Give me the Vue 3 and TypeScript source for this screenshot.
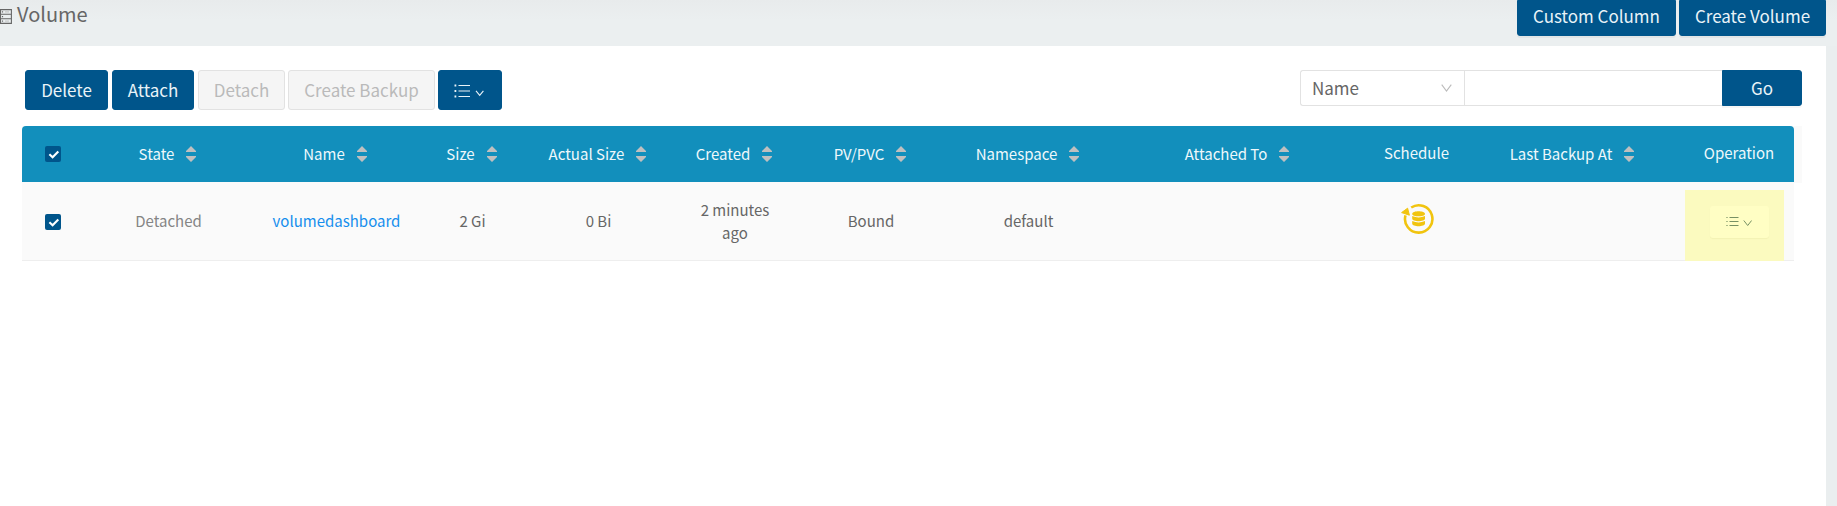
<script setup lang="ts">
interface Column {
  key: string
  label: string
  sortable: boolean
  value?: string
}

const columns: Column[] = [
  { key: 'state', label: 'State', sortable: true, value: 'Detached' },
  { key: 'name', label: 'Name', sortable: true, value: 'volumedashboard' },
  { key: 'size', label: 'Size', sortable: true, value: '2 Gi' },
  { key: 'actual', label: 'Actual Size', sortable: true, value: '0 Bi' },
  { key: 'created', label: 'Created', sortable: true, value: '2 minutes ago' },
  { key: 'pv', label: 'PV/PVC', sortable: true, value: 'Bound' },
  { key: 'namespace', label: 'Namespace', sortable: true, value: 'default' },
  { key: 'attached', label: 'Attached To', sortable: true },
  { key: 'schedule', label: 'Schedule', sortable: false },
  { key: 'backup', label: 'Last Backup At', sortable: true },
  { key: 'operation', label: 'Operation', sortable: false },
]
</script>

<template>
  <div class="page">
    <header class="top">
      <div class="title">
        <svg class="title-icon" width="12" height="16" viewBox="0 0 12 16">
          <path d="M.5 .6H11.4V14.4H.5ZM.5 5.2H11.4M.5 9.8H11.4" fill="none" stroke="#666" stroke-width="1.1" />
          <path d="M2.5 2.3v1.3M2.5 6.9v1.3M2.5 11.5v1.3" stroke="#666" stroke-width="1.2" />
          <path d="M5 2.9h4M5 12.1h4" stroke="#aaa" stroke-width=".7" />
        </svg>
        <span>Volume</span>
      </div>
      <div class="top-actions">
        <button class="btn primary custom">Custom Column</button>
        <button class="btn primary create">Create Volume</button>
      </div>
    </header>
    <main class="content">
      <div class="toolbar">
        <div class="actions">
          <button class="btn primary delete">Delete</button>
          <button class="btn primary attach">Attach</button>
          <button class="btn disabled detach">Detach</button>
          <button class="btn disabled mkbackup">Create Backup</button>
          <button class="btn primary more">
            <svg width="30" height="16" viewBox="0 0 30 16" fill="none" stroke="currentColor">
              <path d="M4.5 2.5H16M4.5 8H16M4.5 13.5H16" stroke-width="1.2" />
              <path d="M.5 2.5H2.3M.5 8H2.3M.5 13.5H2.3" stroke-width="1.8" />
              <path d="M22 7.8L25.7 12.4L29.4 7.8" stroke-width="1.1" />
            </svg>
          </button>
        </div>
        <div class="search">
          <div class="select">
            <span>Name</span>
            <svg width="11" height="8" viewBox="0 0 11 8"><path d="M.7.6L5.5 7L10.3.6" fill="none" stroke="#bbb" stroke-width="1.1" /></svg>
          </div>
          <div class="field"></div>
          <button class="btn primary go">Go</button>
        </div>
      </div>
      <div class="table-wrap">
        <div class="table">
          <div class="row head">
            <div class="cell">
              <span class="check"><svg width="16" height="16" viewBox="0 0 16 16"><path d="M4.4 8.2L7.6 11.2L13.3 5.4" fill="none" stroke="#fff" stroke-width="2.1" /></svg></span>
            </div>
            <div v-for="c in columns" :key="c.key" class="cell" :class="['h-' + c.key, { plain: !c.sortable }]">
              <span class="label">{{ c.label }}</span>
              <svg v-if="c.sortable" class="sort" width="10" height="16" viewBox="0 0 10 16">
                <path d="M5 0L10 5V6H0V5ZM5 16L10 11V10H0V11Z" fill="#bfbfbf" />
              </svg>
            </div>
          </div>
          <div class="row body">
            <div class="cell">
              <span class="check"><svg width="16" height="16" viewBox="0 0 16 16"><path d="M4.4 8.2L7.6 11.2L13.3 5.4" fill="none" stroke="#fff" stroke-width="2.1" /></svg></span>
            </div>
            <div v-for="c in columns" :key="c.key" class="cell" :class="'b-' + c.key">
              <svg v-if="c.key === 'schedule'" class="schedule" width="34" height="32" viewBox="0 0 34 32">
                <path d="M11.2 4.5A13.7 13.7 0 1 1 5.5 12.3" fill="none" stroke="#f1c40f" stroke-width="2.6" />
                <path d="M7.6 5.2L1.6 9.6L9.4 12.2Z" fill="#f1c40f" stroke="#f1c40f" />
                <path d="M12.2 10.9C12.2 7.5 25 7.5 25 10.9C25 14 12.2 14 12.2 10.9ZM12.2 13.1Q18.6 16 25 13.1V15.6C25 19.2 12.2 19.2 12.2 15.6ZM12.2 18.1Q18.6 21 25 18.1V20.6C25 24.2 12.2 24.2 12.2 20.6Z" fill="#f1c40f" />
              </svg>
              <div v-else-if="c.key === 'operation'" class="highlight">
                <button class="op">
                  <svg width="26" height="12" viewBox="0 0 26 12" fill="none" stroke="#779064">
                    <path d="M3.5 1.5H12.5M3.5 5.5H12.5M3.5 9.5H12.5M.4 1.5H1.6M.4 5.5H1.6M.4 9.5H1.6" />
                    <path d="M17.8 4.5L21.7 9.5L25.6 4.5" />
                  </svg>
                </button>
              </div>
              <span v-else class="label">{{ c.value }}</span>
            </div>
          </div>
        </div>
      </div>
    </main>
  </div>
</template>

<style>
body { margin: 0; overflow: hidden; }
</style>

<style scoped>
.page {
  box-sizing: border-box;
  width: 1837px;
  height: 506px;
  background: #eaeeef;
  font-family: "Noto Sans CJK SC", "Noto Sans", sans-serif;
  color: #666;
  font-size: 15px;
  overflow: hidden;
}
.top {
  height: 46px;
  display: flex;
  justify-content: space-between;
  background: linear-gradient(#e8ebec, #ebeff0 20px);
  padding-right: 11px;
}
.title { display: flex; height: 26px; align-items: center; font-size: 20px; }
.title-icon { margin: 8px 5px 0 0; }
.top-actions { display: flex; gap: 3px; }
.btn {
  box-sizing: border-box;
  display: flex;
  align-items: center;
  justify-content: center;
  height: 40px;
  padding: 0;
  border: 1px solid #00558b;
  border-radius: 3px;
  font: inherit;
  font-size: 17px;
  line-height: 20px;
  white-space: nowrap;
}
.primary { background: #00558b; color: #e9f3f8; }
.disabled { background: #f5f5f5; color: #bababa; border-color: #e2e2e2; }
.top-actions .btn { height: 36px; border-radius: 0 0 3px 3px; box-shadow: 0 2px 0 rgba(0, 0, 0, .04); padding-bottom: 4px; }
.custom { width: 159px; }
.create { width: 147px; }
.content { width: 1826px; height: 460px; box-sizing: border-box; background: #fff; padding: 24px 24px 0 22px; }
.toolbar { display: flex; justify-content: space-between; height: 56px; padding-left: 3px; }
.actions { display: flex; }
.delete { width: 83px; margin-right: 4px; }
.attach { width: 82px; margin-right: 4px; }
.detach { width: 87px; margin-right: 3px; }
.mkbackup { width: 147px; margin-right: 3px; }
.more { width: 64px; }
.more svg { margin: 1px 3px 0 0; }
.search { display: flex; height: 36px; }
.select {
  box-sizing: border-box;
  width: 164px;
  display: flex;
  align-items: center;
  justify-content: space-between;
  border: 1px solid #e2e2e2;
  border-right: 0;
  border-radius: 3px 0 0 3px;
  padding: 0 12px 0 11px;
  font-size: 17px;
}
.select span { margin-bottom: 2px; }
.field { box-sizing: border-box; width: 258px; border: 1px solid #e2e2e2; border-right: 0; }
.go { width: 80px; height: 36px; border-radius: 0 3px 3px 0; box-shadow: 0 2px 0 rgba(0, 0, 0, .035); }
.table-wrap { width: 1780px; background: linear-gradient(#fafafa 57px, #fff 57px); }
.table { width: 1772px; overflow: hidden; border-radius: 4px 4px 0 0; }
.row { display: grid; grid-template-columns: 62px 169px 166px 107px 145px 128px 144px 171px 248px 109px 204px 127px; }
.head { height: 56px; background: #128fbc; color: #eef8fb; }
.body { height: 78px; background: #fafafa; border-bottom: 1px solid #eee; }
.cell { display: flex; align-items: center; justify-content: center; text-align: center; line-height: 23px; min-width: 0; }
.label { white-space: nowrap; margin-bottom: 2px; }
.sort { margin: 0 2px 0 12px; }
.plain .label { margin-bottom: 4px; }
.h-operation .label { margin-left: 1px; }
.check { width: 16px; height: 16px; background: #00558b; border-radius: 2px; }
.body .check { margin-top: 2px; }
.check svg { display: block; }
.b-state { color: #858585; }
.b-name { color: #168eed; }
.b-name .label { margin-left: 1px; }
.b-created .label { width: 78px; white-space: normal; margin-bottom: 0; }
.schedule { margin: 0 0 4px 1px; }
.highlight {
  align-self: end;
  margin: 0 8px -1px 0;
  width: 99px;
  height: 71px;
  background: #fbfabf;
  display: flex;
  justify-content: center;
  box-sizing: border-box;
  padding: 16px 0 0 9px;
}
.op {
  width: 59px;
  height: 32px;
  padding: 0;
  border: 0;
  border-radius: 3px;
  background: #fffec4;
  box-shadow: 0 1px 1px rgba(120, 120, 0, .06);
  display: flex;
  align-items: center;
  justify-content: center;
}
</style>
